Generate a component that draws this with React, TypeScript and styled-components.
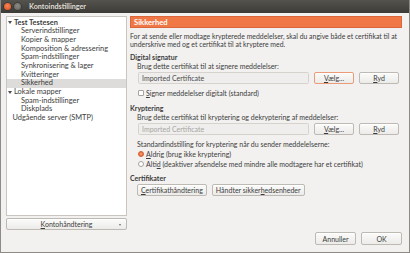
import React from "react";
import styled, { createGlobalStyle, css } from "styled-components";

const GlobalStyle = createGlobalStyle`
  html, body {
    margin: 0;
    padding: 0;
    background: #f2f1f0;
  }
  * {
    box-sizing: border-box;
  }
`;

const FONT = `"Lato", "Open Sans", sans-serif`;
const SIZE = 7;

const Window = styled.div`
  width: 410px;
  height: 253px;
  display: flex;
  flex-direction: column;
  background: #f2f1f0;
  border: 1px solid #8e8b86;
  border-top: none;
  font-family: ${FONT};
  font-size: ${SIZE}px;
  color: #3c3c3c;
  overflow: hidden;
`;

const TitleBar = styled.div`
  height: 13px;
  flex: none;
  display: flex;
  align-items: center;
  padding-left: 3px;
  gap: 3px;
  background: linear-gradient(#55534e, #3c3b37);
`;

const WinButton = styled.span<{ $close?: boolean }>`
  width: 7px;
  height: 7px;
  border-radius: 50%;
  flex: none;
  box-shadow: 0 0 0 0.5px #2e2d2a;
  ${(p) =>
    p.$close
      ? css`
          background: radial-gradient(circle at 50% 40%, #f68658, #e2491f);
        `
      : css`
          background: radial-gradient(circle at 50% 40%, #8d8b85, #5f5e59);
        `}
`;

const Title = styled.span`
  margin-left: 5px;
  font-weight: 700;
  font-size: 7.2px;
  color: #dfdbd2;
`;

const Body = styled.div`
  flex: 1;
  display: flex;
  gap: 3px;
  padding: 3px 7px 7px 5px;
  min-height: 0;
`;

const LeftColumn = styled.div`
  width: 121px;
  flex: none;
  display: flex;
  flex-direction: column;
  gap: 2px;
  padding-bottom: 15px;
`;

const Tree = styled.div`
  flex: 1;
  background: #ffffff;
  border: 1px solid #c9c6c1;
  padding-top: 1.5px;
  font-size: 7.4px;
`;

const TreeRow = styled.div<{ $level: number; $selected?: boolean; $bold?: boolean }>`
  height: 8.7px;
  line-height: 8.7px;
  display: flex;
  align-items: center;
  padding-left: ${(p) => (p.$level === 0 ? 1 : p.$level === 1 ? 5.5 : 14)}px;
  font-weight: ${(p) => (p.$bold ? 700 : 400)};
  background: ${(p) => (p.$selected ? "#dedcda" : "transparent")};
  white-space: nowrap;
`;

const Expander = styled.span`
  width: 0;
  height: 0;
  margin-right: 2px;
  border-left: 2px solid transparent;
  border-right: 2px solid transparent;
  border-top: 3px solid #4c4c4c;
`;

const Button = styled.button<{ $focus?: boolean; $width?: number }>`
  font-family: ${FONT};
  font-size: ${SIZE}px;
  color: #3c3c3c;
  height: 12px;
  padding: 0 3px;
  ${(p) => p.$width && `width: ${p.$width}px;`}
  flex: none;
  border-radius: 2px;
  border: 1px solid ${(p) => (p.$focus ? "#eb9b78" : "#bdb9b3")};
  background: linear-gradient(#fbfbfa, #ecebe9);
  box-shadow: inset 0 1px 0 #ffffff;
  display: flex;
  align-items: center;
  justify-content: center;
  white-space: nowrap;
  cursor: default;
`;

const ComboButton = styled(Button)`
  width: 100%;
  position: relative;
  height: 12px;
`;

const ComboArrow = styled.span`
  position: absolute;
  right: 5px;
  top: 4.5px;
  width: 0;
  height: 0;
  border-left: 1.8px solid transparent;
  border-right: 1.8px solid transparent;
  border-top: 2.6px solid #6c6c6c;
`;

const RightColumn = styled.div`
  flex: 1;
  display: flex;
  flex-direction: column;
  min-width: 0;
`;

const Header = styled.div`
  height: 12px;
  flex: none;
  background: #f07746;
  border: 1px solid #d9673b;
  color: #ffffff;
  font-weight: 700;
  font-size: 7.6px;
  display: flex;
  align-items: center;
  padding-left: 3px;
`;

const Intro = styled.p`
  margin: 5px 0 0 0;
  line-height: 7.5px;
  font-size: 6.9px;
  white-space: nowrap;
`;

const SectionTitle = styled.div<{ $mt: number }>`
  margin-top: ${(p) => p.$mt}px;
  font-weight: 700;
  line-height: 8.5px;
`;

const Label = styled.div<{ $mt?: number }>`
  margin-top: ${(p) => p.$mt ?? 0}px;
  padding-left: 7px;
  line-height: 8px;
  white-space: nowrap;
`;

const FieldRow = styled.div<{ $mt: number }>`
  margin-top: ${(p) => p.$mt}px;
  display: flex;
  gap: 5px;
  padding-left: 8px;
  padding-right: 3px;
  height: 12px;
`;

const Field = styled.div<{ $disabled?: boolean }>`
  flex: 1;
  height: 12px;
  display: flex;
  align-items: center;
  padding-left: 3px;
  border: 1px solid #d6d3cf;
  border-radius: 1.5px;
  background: #efeeed;
  color: ${(p) => (p.$disabled ? "#a7a5a1" : "#4a4a4a")};
`;

const OptionRow = styled.div<{ $mt?: number; $h: number }>`
  margin-top: ${(p) => p.$mt ?? 0}px;
  height: ${(p) => p.$h}px;
  display: flex;
  align-items: center;
  gap: 2.5px;
  padding-left: 7.5px;
  white-space: nowrap;
`;

const CheckBox = styled.span`
  width: 6px;
  height: 6px;
  border: 0.8px solid #a6a39e;
  border-radius: 1px;
  background: #ffffff;
  flex: none;
`;

const Radio = styled.span<{ $checked?: boolean }>`
  width: 6px;
  height: 6px;
  border-radius: 50%;
  flex: none;
  ${(p) =>
    p.$checked
      ? css`
          background: radial-gradient(circle, #f9a17c 0, #f07746 60%, #db5f2f 100%);
          border: 0.6px solid #cf5a2c;
        `
      : css`
          background: #ffffff;
          border: 0.8px solid #a6a39e;
        `}
`;

const ButtonRow = styled.div<{ $mt: number }>`
  margin-top: ${(p) => p.$mt}px;
  display: flex;
  gap: 5px;
  padding-left: 7px;
`;

const Spacer = styled.div`
  flex: 1;
`;

const DialogButtons = styled.div`
  display: flex;
  justify-content: flex-end;
  gap: 5px;
  height: 13px;
`;

const DialogButton = styled(Button)`
  height: 13px;
  width: 41px;
`;

const U = styled.span`
  text-decoration: underline;
  text-underline-offset: 1px;
  text-decoration-thickness: 0.5px;
`;

const accounts: { label: string; level: number; bold?: boolean; selected?: boolean; expander?: boolean }[] = [
  { label: "Test Testesen", level: 0, bold: true, expander: true },
  { label: "Serverindstillinger", level: 2 },
  { label: "Kopier & mapper", level: 2 },
  { label: "Komposition & adressering", level: 2 },
  { label: "Spam-indstillinger", level: 2 },
  { label: "Synkronisering & lager", level: 2 },
  { label: "Kvitteringer", level: 2 },
  { label: "Sikkerhed", level: 2, selected: true },
  { label: "Lokale mapper", level: 0, expander: true },
  { label: "Spam-indstillinger", level: 2 },
  { label: "Diskplads", level: 2 },
  { label: "Udgående server (SMTP)", level: 1 },
];

export default function App() {
  return (
    <>
      <GlobalStyle />
      <Window>
        <TitleBar>
          <WinButton $close />
          <WinButton />
          <Title>Kontoindstillinger</Title>
        </TitleBar>
        <Body>
          <LeftColumn>
            <Tree>
              {accounts.map((a, i) => (
                <TreeRow key={i} $level={a.level} $bold={a.bold} $selected={a.selected}>
                  {a.expander && <Expander />}
                  {a.label}
                </TreeRow>
              ))}
            </Tree>
            <ComboButton>
              <span>
                <U>K</U>ontohåndtering
              </span>
              <ComboArrow />
            </ComboButton>
          </LeftColumn>
          <RightColumn>
            <Header>Sikkerhed</Header>
            <Intro>
              For at sende eller modtage krypterede meddelelser, skal du angive både et certifikat til at
              <br />
              underskrive med og et certifikat til at kryptere med.
            </Intro>

            <SectionTitle $mt={5}>Digital signatur</SectionTitle>
            <Label>Brug dette certifikat til at signere meddelelser:</Label>
            <FieldRow $mt={2}>
              <Field>Imported Certificate</Field>
              <Button $focus $width={40}>
                <span>
                  <U>V</U>ælg...
                </span>
              </Button>
              <Button $width={40}>
                <span>
                  <U>R</U>yd
                </span>
              </Button>
            </FieldRow>
            <OptionRow $mt={5} $h={9}>
              <CheckBox />
              <span>
                <U>S</U>igner meddelelser digitalt (standard)
              </span>
            </OptionRow>

            <SectionTitle $mt={6}>Kryptering</SectionTitle>
            <Label $mt={1}>Brug dette certifikat til kryptering og dekryptering af meddelelser:</Label>
            <FieldRow $mt={2}>
              <Field $disabled>Imported Certificate</Field>
              <Button $width={40}>
                <span>
                  <U>V</U>ælg...
                </span>
              </Button>
              <Button $width={40}>
                <span>
                  <U>R</U>yd
                </span>
              </Button>
            </FieldRow>
            <Label $mt={5}>Standardindstilling for kryptering når du sender meddelelserne:</Label>
            <OptionRow $mt={1} $h={10}>
              <Radio $checked />
              <span>
                <U>A</U>ldrig (brug ikke kryptering)
              </span>
            </OptionRow>
            <OptionRow $h={10}>
              <Radio />
              <span>
                Alti<U>d</U> (deaktiver afsendelse med mindre alle modtagere har et certifikat)
              </span>
            </OptionRow>

            <SectionTitle $mt={5}>Certifikater</SectionTitle>
            <ButtonRow $mt={1}>
              <Button>
                <span>
                  <U>C</U>ertifikathåndtering
                </span>
              </Button>
              <Button>
                <span>
                  Håndter sikker<U>h</U>edsenheder
                </span>
              </Button>
            </ButtonRow>

            <Spacer />
            <DialogButtons>
              <DialogButton>Annuller</DialogButton>
              <DialogButton>OK</DialogButton>
            </DialogButtons>
          </RightColumn>
        </Body>
      </Window>
    </>
  );
}
